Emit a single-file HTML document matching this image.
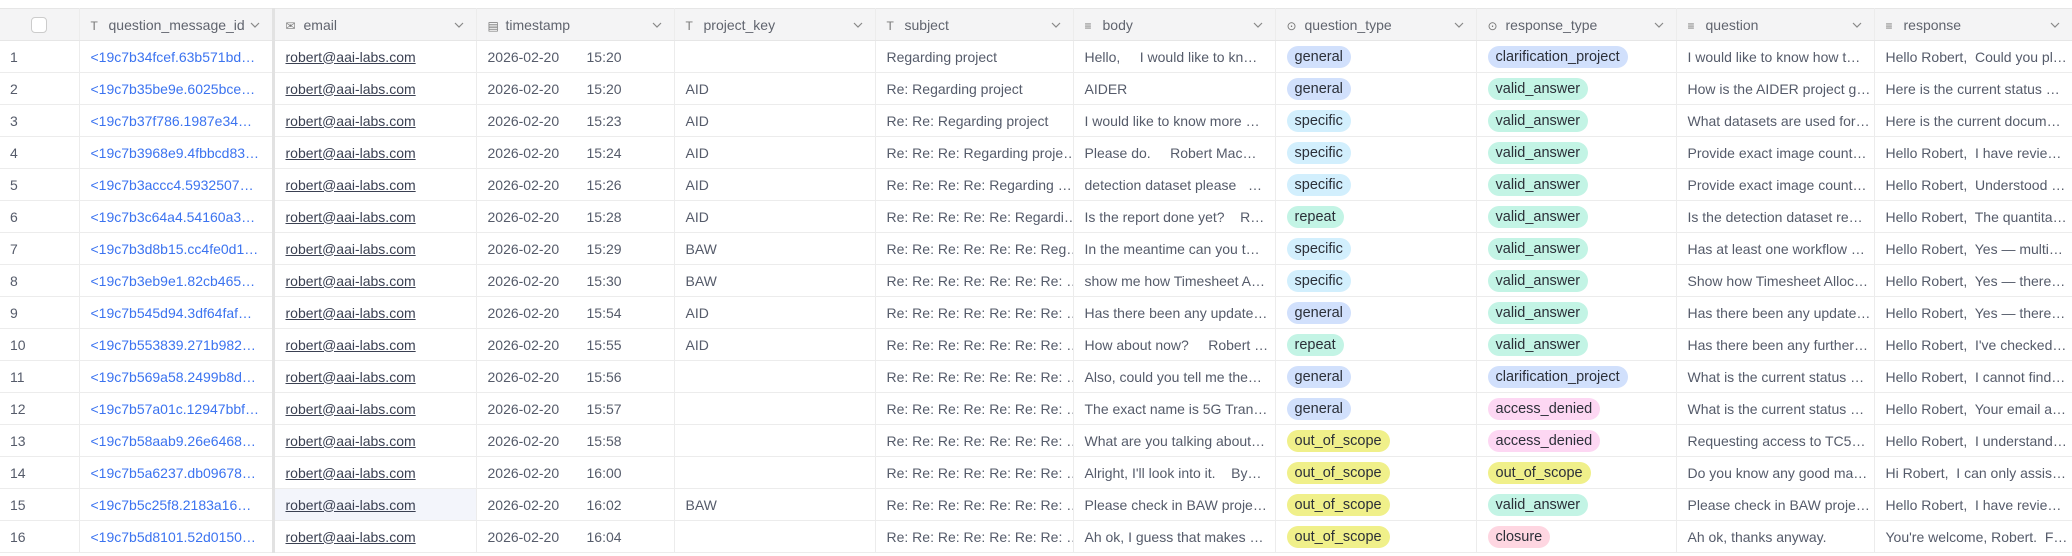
<!DOCTYPE html>
<html><head><meta charset="utf-8"><style>
*{box-sizing:border-box;margin:0;padding:0}
body{width:2072px;height:556px;background:#fff;overflow:hidden;font-family:"Liberation Sans",Arial,sans-serif;font-size:14px;color:#555b6a}
table{position:absolute;top:8px;left:0;border-collapse:collapse;table-layout:fixed;width:2090px}
td,th{height:32px;border-bottom:1px solid #ececec;border-right:1px solid #ececec;white-space:nowrap;overflow:hidden;padding:0 11px;text-align:left;font-weight:normal}
th{background:#f4f4f5;color:#60646e;height:32px;border-top:1px solid #e6e6e6;border-bottom:1px solid #e6e6e6;position:relative}
th .ic{display:inline-block;width:14px;color:#777;margin-right:4px;font-size:12px}
th svg.dd{position:absolute;right:12px;top:13px}
td.n{color:#555b6a;padding-left:10px}
td.q{color:#3b73f0}
td.e a{color:#3a4052;text-decoration:underline}
td.e,th.e{border-left:3px solid #e2e2e2}
.p{display:inline-block;height:22px;line-height:22px;border-radius:11px;padding:0 8px;color:#2b2f38;font-size:14.5px}
.gen{background:#d1e0fc}.spe{background:#d2effd}.rep,.val{background:#c3f4e5}.oos{background:#f0f08a}.acc{background:#fdd7f3}.clo{background:#fed6e1}
.cb{display:inline-block;width:16px;height:16px;border:1px solid #ccc;border-radius:4px;background:#fff;vertical-align:middle}
.t{display:inline-block;width:99px}
</style></head><body>
<svg width="0" height="0" style="position:absolute"><defs><symbol id="ch" viewBox="0 0 10 6"><path d="M1 1l4 4 4-4" fill="none" stroke="#888" stroke-width="1.2"/></symbol></defs></svg>
<table>
<colgroup><col style="width:79px"><col style="width:194px"><col style="width:203px"><col style="width:198px"><col style="width:201px"><col style="width:198px"><col style="width:202px"><col style="width:201px"><col style="width:200px"><col style="width:198px"><col style="width:216px"></colgroup>
<tr><th style="text-align:center"><span class="cb"></span></th><th><span class="ic">T</span>question_message_id<svg class="dd" width="10" height="6"><use href="#ch"/></svg></th><th class="e"><span class="ic">✉</span>email<svg class="dd" width="10" height="6"><use href="#ch"/></svg></th><th><span class="ic">▤</span>timestamp<svg class="dd" width="10" height="6"><use href="#ch"/></svg></th><th><span class="ic">T</span>project_key<svg class="dd" width="10" height="6"><use href="#ch"/></svg></th><th><span class="ic">T</span>subject<svg class="dd" width="10" height="6"><use href="#ch"/></svg></th><th><span class="ic">≡</span>body<svg class="dd" width="10" height="6"><use href="#ch"/></svg></th><th><span class="ic">⊙</span>question_type<svg class="dd" width="10" height="6"><use href="#ch"/></svg></th><th><span class="ic">⊙</span>response_type<svg class="dd" width="10" height="6"><use href="#ch"/></svg></th><th><span class="ic">≡</span>question<svg class="dd" width="10" height="6"><use href="#ch"/></svg></th><th><span class="ic">≡</span>response<svg class="dd" width="10" height="6" style="right:30px"><use href="#ch"/></svg></th></tr>
<tr><td class="n">1</td><td class="q">&lt;19c7b34fcef.63b571bd…</td><td class="e"><a>robert@aai-labs.com</a></td><td><span class="t">2026-02-20</span>15:20</td><td></td><td>Regarding project</td><td>Hello,&nbsp;&nbsp;&nbsp;&nbsp; I would like to kn…</td><td><span class="p gen">general</span></td><td><span class="p gen">clarification_project</span></td><td>I would like to know how t…</td><td>Hello Robert,&nbsp; Could you pl…</td></tr>
<tr><td class="n">2</td><td class="q">&lt;19c7b35be9e.6025bce…</td><td class="e"><a>robert@aai-labs.com</a></td><td><span class="t">2026-02-20</span>15:20</td><td>AID</td><td>Re: Regarding project</td><td>AIDER</td><td><span class="p gen">general</span></td><td><span class="p val">valid_answer</span></td><td>How is the AIDER project g…</td><td>Here is the current status …</td></tr>
<tr><td class="n">3</td><td class="q">&lt;19c7b37f786.1987e34…</td><td class="e"><a>robert@aai-labs.com</a></td><td><span class="t">2026-02-20</span>15:23</td><td>AID</td><td>Re: Re: Regarding project</td><td>I would like to know more …</td><td><span class="p spe">specific</span></td><td><span class="p val">valid_answer</span></td><td>What datasets are used for…</td><td>Here is the current docum…</td></tr>
<tr><td class="n">4</td><td class="q">&lt;19c7b3968e9.4fbbcd83…</td><td class="e"><a>robert@aai-labs.com</a></td><td><span class="t">2026-02-20</span>15:24</td><td>AID</td><td>Re: Re: Re: Regarding proje…</td><td>Please do.&nbsp;&nbsp;&nbsp;&nbsp; Robert Mac…</td><td><span class="p spe">specific</span></td><td><span class="p val">valid_answer</span></td><td>Provide exact image count…</td><td>Hello Robert,&nbsp; I have revie…</td></tr>
<tr><td class="n">5</td><td class="q">&lt;19c7b3accc4.5932507…</td><td class="e"><a>robert@aai-labs.com</a></td><td><span class="t">2026-02-20</span>15:26</td><td>AID</td><td>Re: Re: Re: Re: Regarding …</td><td>detection dataset please&nbsp;&nbsp; …</td><td><span class="p spe">specific</span></td><td><span class="p val">valid_answer</span></td><td>Provide exact image count…</td><td>Hello Robert,&nbsp; Understood …</td></tr>
<tr><td class="n">6</td><td class="q">&lt;19c7b3c64a4.54160a3…</td><td class="e"><a>robert@aai-labs.com</a></td><td><span class="t">2026-02-20</span>15:28</td><td>AID</td><td>Re: Re: Re: Re: Re: Regardi…</td><td>Is the report done yet?&nbsp;&nbsp;&nbsp; R…</td><td><span class="p rep">repeat</span></td><td><span class="p val">valid_answer</span></td><td>Is the detection dataset re…</td><td>Hello Robert,&nbsp; The quantita…</td></tr>
<tr><td class="n">7</td><td class="q">&lt;19c7b3d8b15.cc4fe0d1…</td><td class="e"><a>robert@aai-labs.com</a></td><td><span class="t">2026-02-20</span>15:29</td><td>BAW</td><td>Re: Re: Re: Re: Re: Re: Reg…</td><td>In the meantime can you t…</td><td><span class="p spe">specific</span></td><td><span class="p val">valid_answer</span></td><td>Has at least one workflow …</td><td>Hello Robert,&nbsp; Yes — multi…</td></tr>
<tr><td class="n">8</td><td class="q">&lt;19c7b3eb9e1.82cb465…</td><td class="e"><a>robert@aai-labs.com</a></td><td><span class="t">2026-02-20</span>15:30</td><td>BAW</td><td>Re: Re: Re: Re: Re: Re: Re: …</td><td>show me how Timesheet A…</td><td><span class="p spe">specific</span></td><td><span class="p val">valid_answer</span></td><td>Show how Timesheet Alloc…</td><td>Hello Robert,&nbsp; Yes — there…</td></tr>
<tr><td class="n">9</td><td class="q">&lt;19c7b545d94.3df64faf…</td><td class="e"><a>robert@aai-labs.com</a></td><td><span class="t">2026-02-20</span>15:54</td><td>AID</td><td>Re: Re: Re: Re: Re: Re: Re: …</td><td>Has there been any update…</td><td><span class="p gen">general</span></td><td><span class="p val">valid_answer</span></td><td>Has there been any update…</td><td>Hello Robert,&nbsp; Yes — there…</td></tr>
<tr><td class="n">10</td><td class="q">&lt;19c7b553839.271b982…</td><td class="e"><a>robert@aai-labs.com</a></td><td><span class="t">2026-02-20</span>15:55</td><td>AID</td><td>Re: Re: Re: Re: Re: Re: Re: …</td><td>How about now?&nbsp;&nbsp;&nbsp;&nbsp; Robert …</td><td><span class="p rep">repeat</span></td><td><span class="p val">valid_answer</span></td><td>Has there been any further…</td><td>Hello Robert,&nbsp; I've checked…</td></tr>
<tr><td class="n">11</td><td class="q">&lt;19c7b569a58.2499b8d…</td><td class="e"><a>robert@aai-labs.com</a></td><td><span class="t">2026-02-20</span>15:56</td><td></td><td>Re: Re: Re: Re: Re: Re: Re: …</td><td>Also, could you tell me the…</td><td><span class="p gen">general</span></td><td><span class="p gen">clarification_project</span></td><td>What is the current status …</td><td>Hello Robert,&nbsp; I cannot find…</td></tr>
<tr><td class="n">12</td><td class="q">&lt;19c7b57a01c.12947bbf…</td><td class="e"><a>robert@aai-labs.com</a></td><td><span class="t">2026-02-20</span>15:57</td><td></td><td>Re: Re: Re: Re: Re: Re: Re: …</td><td>The exact name is 5G Tran…</td><td><span class="p gen">general</span></td><td><span class="p acc">access_denied</span></td><td>What is the current status …</td><td>Hello Robert,&nbsp; Your email a…</td></tr>
<tr><td class="n">13</td><td class="q">&lt;19c7b58aab9.26e6468…</td><td class="e"><a>robert@aai-labs.com</a></td><td><span class="t">2026-02-20</span>15:58</td><td></td><td>Re: Re: Re: Re: Re: Re: Re: …</td><td>What are you talking about…</td><td><span class="p oos">out_of_scope</span></td><td><span class="p acc">access_denied</span></td><td>Requesting access to TC5…</td><td>Hello Robert,&nbsp; I understand…</td></tr>
<tr><td class="n">14</td><td class="q">&lt;19c7b5a6237.db09678…</td><td class="e"><a>robert@aai-labs.com</a></td><td><span class="t">2026-02-20</span>16:00</td><td></td><td>Re: Re: Re: Re: Re: Re: Re: …</td><td>Alright, I'll look into it.&nbsp;&nbsp;&nbsp; By…</td><td><span class="p oos">out_of_scope</span></td><td><span class="p oos">out_of_scope</span></td><td>Do you know any good ma…</td><td>Hi Robert,&nbsp; I can only assis…</td></tr>
<tr><td class="n">15</td><td class="q">&lt;19c7b5c25f8.2183a16…</td><td class="e" style="background:#f3f5fb"><a>robert@aai-labs.com</a></td><td><span class="t">2026-02-20</span>16:02</td><td>BAW</td><td>Re: Re: Re: Re: Re: Re: Re: …</td><td>Please check in BAW proje…</td><td><span class="p oos">out_of_scope</span></td><td><span class="p val">valid_answer</span></td><td>Please check in BAW proje…</td><td>Hello Robert,&nbsp; I have revie…</td></tr>
<tr><td class="n">16</td><td class="q">&lt;19c7b5d8101.52d0150…</td><td class="e"><a>robert@aai-labs.com</a></td><td><span class="t">2026-02-20</span>16:04</td><td></td><td>Re: Re: Re: Re: Re: Re: Re: …</td><td>Ah ok, I guess that makes …</td><td><span class="p oos">out_of_scope</span></td><td><span class="p clo">closure</span></td><td>Ah ok, thanks anyway.</td><td>You're welcome, Robert.&nbsp; F…</td></tr>
</table>
</body></html>
